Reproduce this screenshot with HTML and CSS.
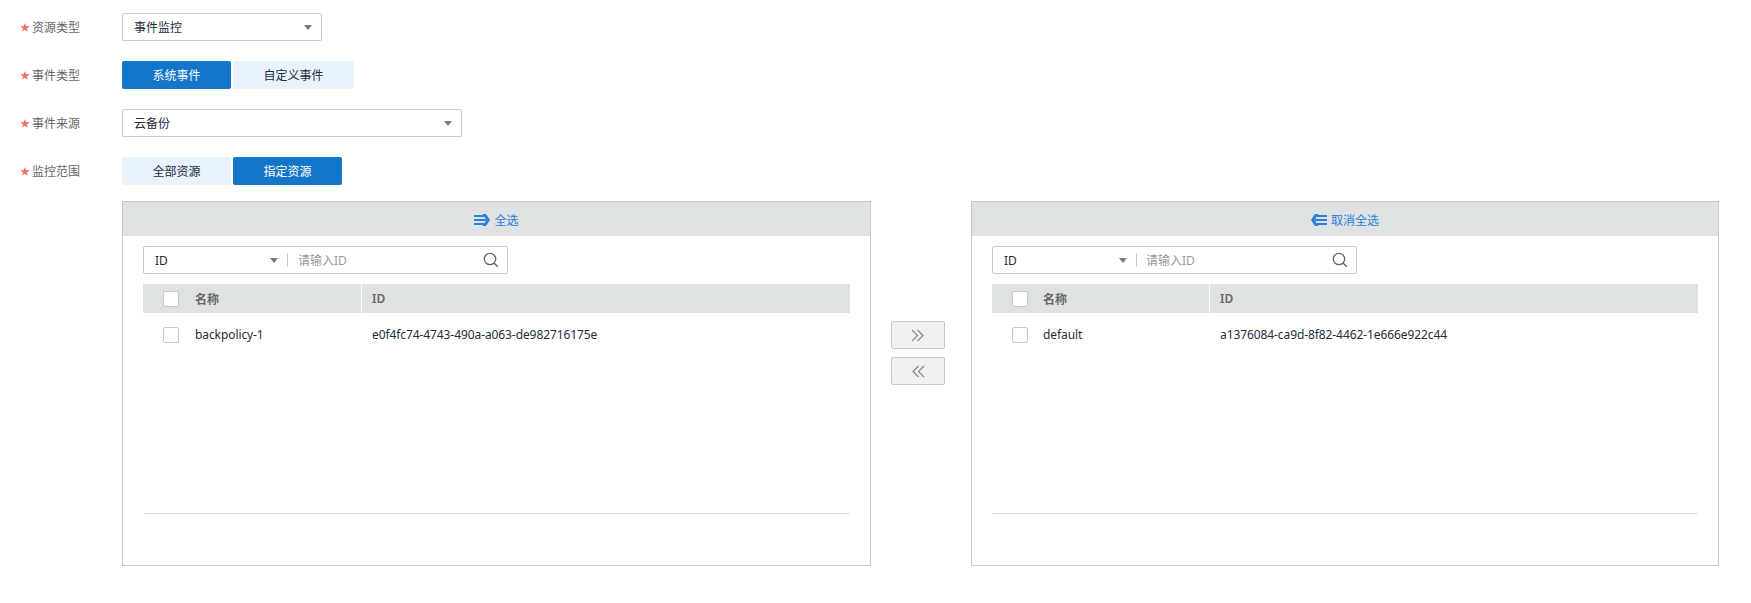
FILE: index.html
```html
<!DOCTYPE html>
<html lang="zh">
<head>
<meta charset="utf-8">
<title>事件监控</title>
<link rel="stylesheet" href="styles.css">
</head>
<body>
<form class="form">
  <div class="row">
    <label class="label"><span class="star">★</span>资源类型</label>
    <div class="select select-sm"><span>事件监控</span><i class="caret"></i></div>
  </div>
  <div class="row">
    <label class="label"><span class="star">★</span>事件类型</label>
    <div class="tabs">
      <button type="button" class="tab tab-on">系统事件</button>
      <button type="button" class="tab tab-wide">自定义事件</button>
    </div>
  </div>
  <div class="row">
    <label class="label"><span class="star">★</span>事件来源</label>
    <div class="select select-lg"><span>云备份</span><i class="caret"></i></div>
  </div>
  <div class="row row-last">
    <label class="label"><span class="star">★</span>监控范围</label>
    <div class="tabs">
      <button type="button" class="tab">全部资源</button>
      <button type="button" class="tab tab-on">指定资源</button>
    </div>
  </div>

  <div class="transfer">
    <section class="panel panel-left">
      <div class="panel-head">
        <svg class="head-icon" width="16" height="12" viewBox="0 0 16 12"><path d="M0 1h10v2H0zM0 5h12v2H0zM0 9h10v2H0z" fill="#2a7fd8"/><path d="M8.500 0h3.500L16 6l-4 6H8.500l4-6z" fill="#2a7fd8"/></svg>
        <span>全选</span>
      </div>
      <div class="panel-body">
        <div class="search">
          <span class="search-key">ID</span><i class="caret"></i><span class="search-sep"></span>
          <span class="search-ph">请输入ID</span>
          <svg class="search-icon" width="16" height="16" viewBox="0 0 16 16"><circle cx="7" cy="7" r="5.700" fill="none" stroke="#666" stroke-width="1.300"/><path d="M11 11l3.800 3.800" stroke="#666" stroke-width="1.500"/></svg>
        </div>
        <div class="thead">
          <div class="th th-name"><span class="check"></span><span>名称</span></div>
          <div class="th th-id">ID</div>
        </div>
        <div class="tr">
          <div class="td-name"><span class="check"></span><span class="cell">backpolicy-1</span></div>
          <div class="td-id">e0f4fc74-4743-490a-a063-de982716175e</div>
        </div>
      </div>
    </section>

    <div class="moves">
      <button type="button" class="move"><svg width="14" height="13" viewBox="0 0 14 13"><path d="M1 1l5.500 5.500L1 12M6.500 1l5.500 5.500L6.500 12" fill="none" stroke="#8a8a8a" stroke-width="1.300"/></svg></button>
      <button type="button" class="move"><svg width="14" height="13" viewBox="0 0 14 13"><path d="M13 1L7.500 6.500 13 12M7.500 1L2 6.500 7.500 12" fill="none" stroke="#8a8a8a" stroke-width="1.300"/></svg></button>
    </div>

    <section class="panel panel-right">
      <div class="panel-head">
        <svg class="head-icon" width="16" height="12" viewBox="0 0 16 12"><path d="M6 1h10v2H6zM4 5h12v2H4zM6 9h10v2H6z" fill="#2a7fd8"/><path d="M7.500 0H4L0 6l4 6h3.500l-4-6z" fill="#2a7fd8"/></svg>
        <span>取消全选</span>
      </div>
      <div class="panel-body">
        <div class="search">
          <span class="search-key">ID</span><i class="caret"></i><span class="search-sep"></span>
          <span class="search-ph">请输入ID</span>
          <svg class="search-icon" width="16" height="16" viewBox="0 0 16 16"><circle cx="7" cy="7" r="5.700" fill="none" stroke="#666" stroke-width="1.300"/><path d="M11 11l3.800 3.800" stroke="#666" stroke-width="1.500"/></svg>
        </div>
        <div class="thead">
          <div class="th th-name"><span class="check"></span><span>名称</span></div>
          <div class="th th-id">ID</div>
        </div>
        <div class="tr">
          <div class="td-name"><span class="check"></span><span class="cell">default</span></div>
          <div class="td-id">a1376084-ca9d-8f82-4462-1e666e922c44</div>
        </div>
      </div>
    </section>
  </div>
</form>
</body>
</html>
```
FILE: styles.css
```css
* { box-sizing: border-box; }
html, body { margin: 0; background: #fff; }
body {
  font-family: "Noto Sans", "Noto Sans CJK SC", sans-serif;
  font-size: 12px;
  color: #252b3a;
}
.form { padding: 13px 31px 0 20px; }
.row { display: flex; align-items: center; height: 28px; margin-bottom: 20px; }
.row-last { margin-bottom: 16px; }
.label { width: 102px; color: #666; display: flex; align-items: center; }
.star { color: #f66f6a; font-size: 10px; width: 12px; line-height: 14px; height: 14px; }
.select {
  height: 28px; display: flex; align-items: center; justify-content: space-between;
  border: 1px solid #c8c8c8; border-radius: 2px; padding: 0 9px 0 11px; background: #fff;
}
.select-sm { width: 200px; }
.select-lg { width: 340px; }
.caret { display: block; width: 0; height: 0; border-left: 4px solid transparent; border-right: 4px solid transparent; border-top: 5px solid #7b7b7b; }
.tabs { display: flex; gap: 2px; }
.tab {
  width: 109px; height: 28px; border: 0; border-radius: 2px; padding: 0;
  background: #e8f3fe; color: #252b3a; font: inherit;
}
.tab-wide { width: 121px; }
.tab-on { background: #1476ca; color: #fff; }
.transfer { display: flex; margin-left: 102px; }
.panel { height: 365px; border: 1px solid #c8c8c8; display: flex; flex-direction: column; }
.panel-left { width: 749px; }
.panel-right { width: 748px; }
.panel-head {
  height: 34px; padding-top: 1px; background: #dfe2e3; color: #2a7fd8;
  display: flex; align-items: center; justify-content: center; gap: 4px;
}
.panel-body { padding: 10px 20px 0; flex: 1; }
.search {
  width: 365px; height: 28px; border: 1px solid #c8c8c8; border-radius: 2px;
  display: flex; align-items: center; padding: 0 8px 0 11px;
}
.search-key { width: 115px; }
.search-sep { width: 1px; height: 14px; background: #c8c8c8; margin: 0 10px 0 9px; }
.panel-right .search-sep { margin-right: 9px; }
.search-ph { flex: 1; color: #999; }
.thead { display: flex; height: 29px; margin-top: 10px; background: #dfe2e3; font-weight: 600; color: #666; }
.th { display: flex; align-items: center; }
.th-name { padding-left: 20px; border-right: 1px solid #fff; }
.panel-left .th-name, .panel-left .td-name { width: 219px; }
.panel-right .th-name, .panel-right .td-name { width: 218px; }
.th-id { padding-left: 10px; }
.check { width: 16px; height: 16px; background: #fff; border: 1px solid #c8c8c8; border-radius: 2px; margin-right: 16px; flex: none; }
.panel-right .check { margin-right: 15px; }
.tr { display: flex; height: 201px; padding-top: 14px; align-items: flex-start; border-bottom: 1px solid #e0e0e0; }
.td-name { padding-left: 20px; display: flex; align-items: center; }
.cell { margin-top: -2px; letter-spacing: -0.09px; }
.td-id { padding-left: 10px; line-height: 16px; letter-spacing: -0.09px; }
.moves { width: 100px; padding: 120px 0 0 20px; display: flex; flex-direction: column; gap: 8px; flex: none; }
.move {
  width: 54px; height: 28px; border: 1px solid #c8c8c8; border-radius: 2px; background: #f1f1f1;
  padding: 0; display: flex; align-items: center; justify-content: center;
}
```
